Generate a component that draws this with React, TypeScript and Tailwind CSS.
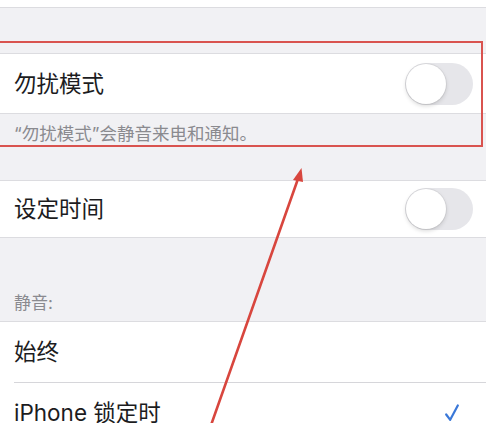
import React from "react";

const font = { fontFamily: 'Inter, "Noto Sans CJK SC", sans-serif' };

function Toggle() {
  return (
    <div className="relative h-[42px] w-[68px] rounded-full bg-[#e6e6ea]">
      <div className="absolute left-[1px] top-[1px] h-[40px] w-[40px] rounded-full bg-white shadow-[0_2px_4px_rgba(0,0,0,0.15),0_0_0_1px_rgba(0,0,0,0.05)]" />
    </div>
  );
}

export default function App() {
  return (
    <div className="relative h-[423px] w-[486px] overflow-hidden bg-[#f1f1f4]" style={font}>
      <div className="h-[8px] border-b border-[#dcdce0] bg-white" />
      <div className="h-[45px]" />
      <div className="flex h-[61px] items-center justify-between border-y border-[#dcdce0] bg-white pl-[14px] pr-[13px]">
        <span className="text-[22.5px] text-[#1c1c1e]">勿扰模式</span>
        <Toggle />
      </div>
      <div className="h-[66px] pl-[14px] pt-[8px] text-[17.5px] leading-[24px] text-[#8a8a8f]">
        “勿扰模式”会静音来电和通知。
      </div>
      <div className="flex h-[58px] items-center justify-between border-y border-[#dcdce0] bg-white pl-[14px] pr-[13px]">
        <span className="text-[22.5px] text-[#1c1c1e]">设定时间</span>
        <Toggle />
      </div>
      <div className="flex h-[83px] items-end pb-[6px] pl-[14px] text-[17px] leading-[24px] text-[#8a8a8f]">
        静音:
      </div>
      <div className="border-t border-[#dcdce0] bg-white">
        <div className="flex h-[60px] items-center pl-[14px]">
          <span className="text-[22.5px] text-[#1c1c1e]">始终</span>
        </div>
        <div className="ml-[14px] border-t border-[#d6d6da]" />
        <div className="flex h-[60px] items-center justify-between pl-[14px] pr-[27px]">
          <span className="text-[22.5px] text-[#1c1c1e]">iPhone 锁定时</span>
          <svg width="14" height="18" viewBox="0 0 14 18" fill="none">
            <path d="M1.2 10.5 L5.2 15.8 L12.8 1.5" stroke="#3a78d8" strokeWidth="2.2" strokeLinecap="round" strokeLinejoin="round" />
          </svg>
        </div>
      </div>

      <div className="pointer-events-none absolute left-[-3px] top-[41px] h-[106px] w-[486px] border-2 border-[#d9534f]" />

      <svg className="pointer-events-none absolute left-0 top-0" width="486" height="423" viewBox="0 0 486 423">
        <line x1="210" y1="428" x2="299" y2="176" stroke="#d8463e" strokeWidth="2.6" strokeLinecap="round" />
        <path d="M301.5 168 L293 180 L303 182 Z" fill="#d8463e" />
      </svg>
    </div>
  );
}
